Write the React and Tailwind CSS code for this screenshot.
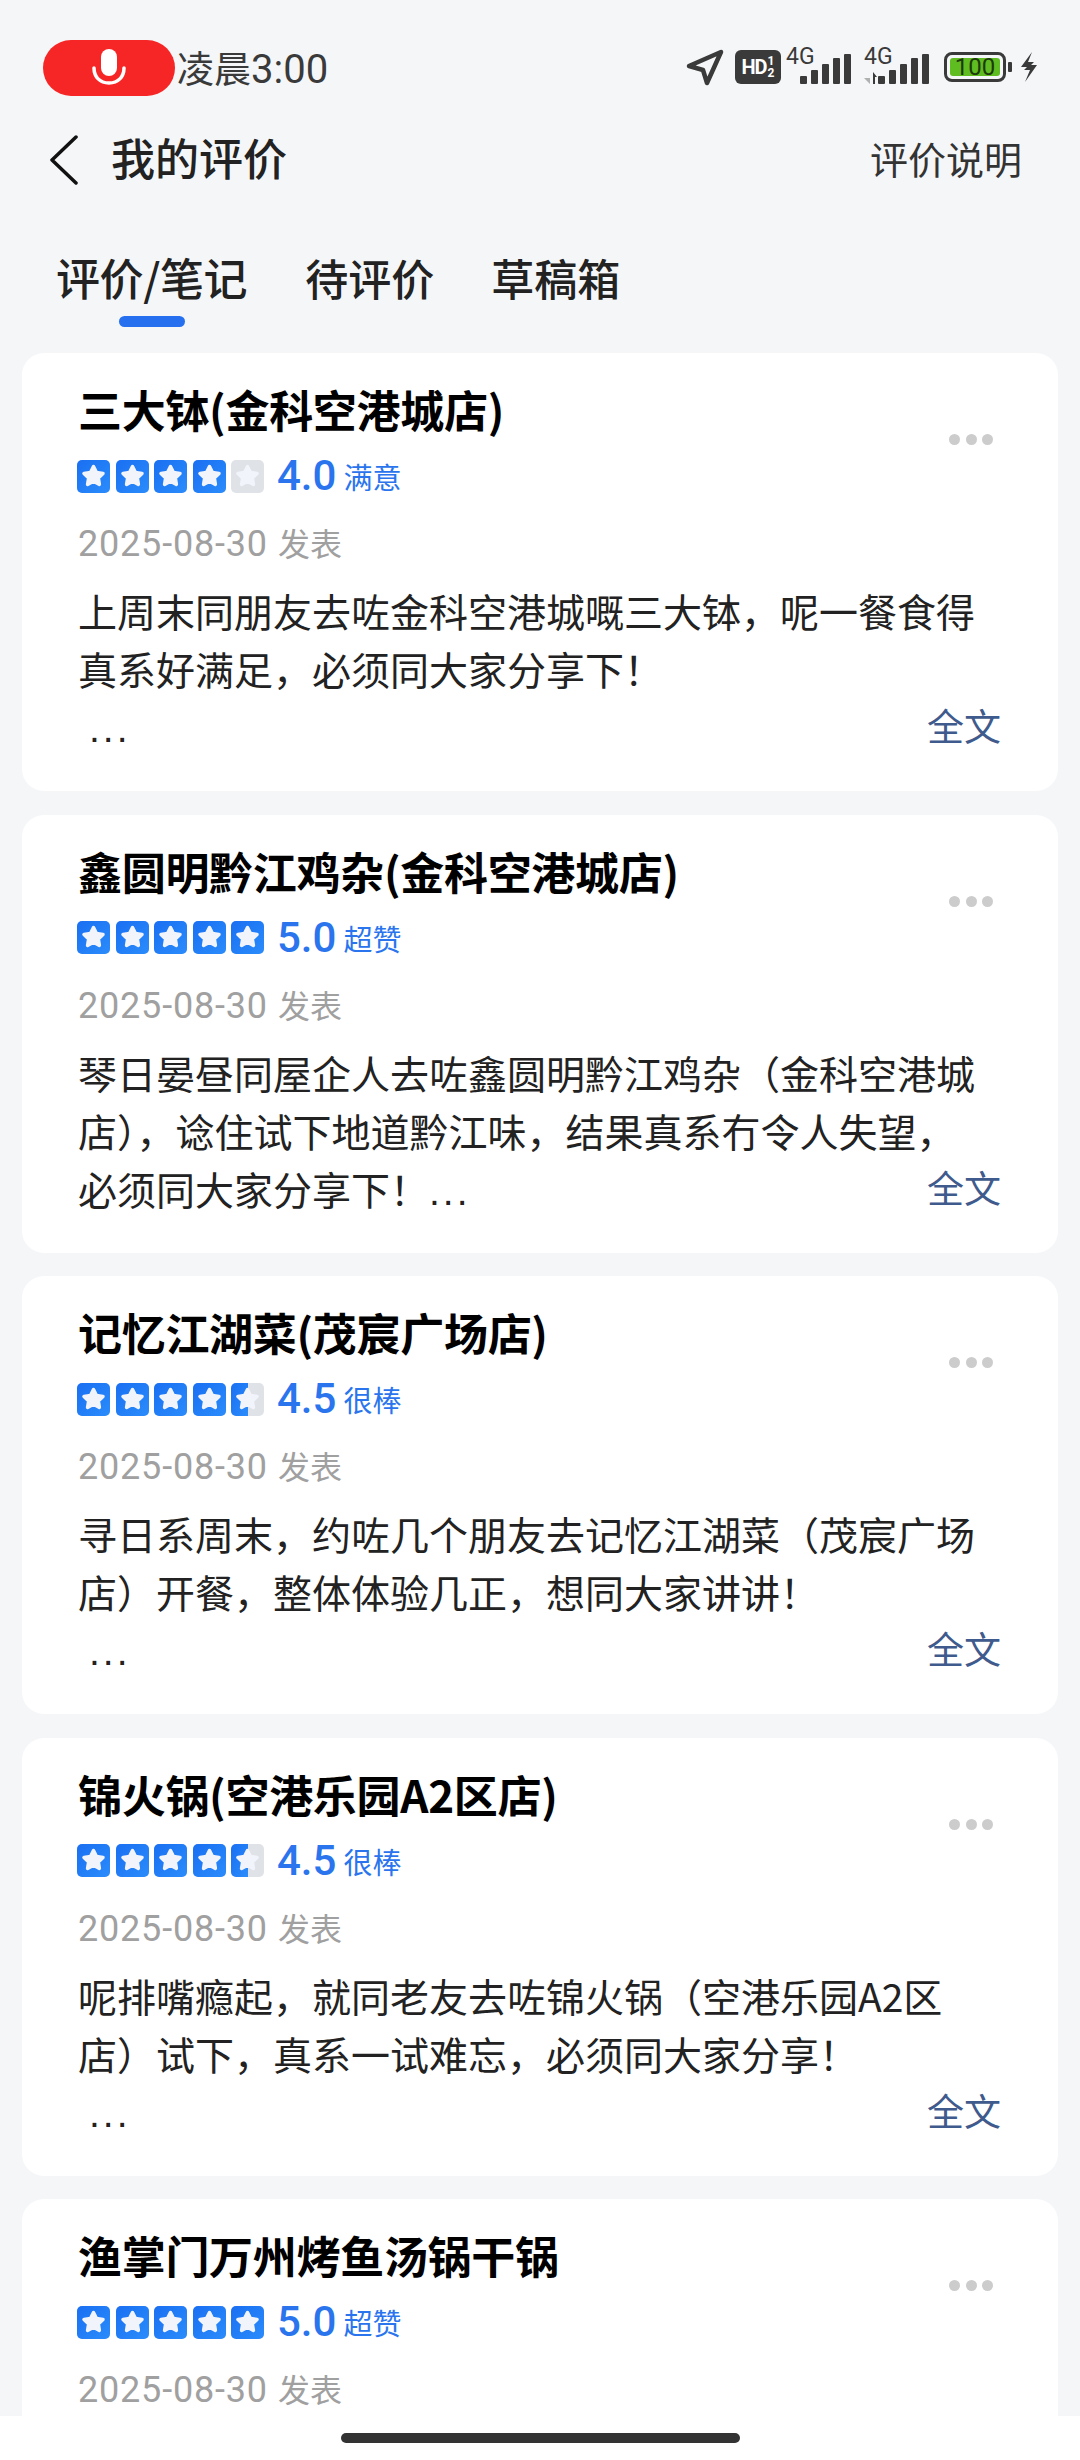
import React from "react";

const font = { fontFamily: '"Noto Sans CJK SC", "Noto Sans", sans-serif' };

const reviews = [
  {
    name: "三大钵(金科空港城店)",
    score: 4,
    label: "4.0",
    word: "满意",
    lines: ["上周末同朋友去咗金科空港城嘅三大钵\uFF0C呢一餐食得", "真系好满足\uFF0C必须同大家分享下\uFF01"],
    dots: "below",
  },
  {
    name: "鑫圆明黔江鸡杂(金科空港城店)",
    score: 5,
    label: "5.0",
    word: "超赞",
    lines: ["琴日晏昼同屋企人去咗鑫圆明黔江鸡杂\uFF08金科空港城", "店\uFF09\uFF0C谂住试下地道黔江味\uFF0C结果真系冇令人失望\uFF0C", "必须同大家分享下\uFF01"],
    dots: "inline",
  },
  {
    name: "记忆江湖菜(茂宸广场店)",
    score: 4.5,
    label: "4.5",
    word: "很棒",
    lines: ["寻日系周末\uFF0C约咗几个朋友去记忆江湖菜\uFF08茂宸广场", "店\uFF09开餐\uFF0C整体体验几正\uFF0C想同大家讲讲\uFF01"],
    dots: "below",
  },
  {
    name: "锦火锅(空港乐园A2区店)",
    score: 4.5,
    label: "4.5",
    word: "很棒",
    lines: ["呢排嘴瘾起\uFF0C就同老友去咗锦火锅\uFF08空港乐园A2区", "店\uFF09试下\uFF0C真系一试难忘\uFF0C必须同大家分享\uFF01"],
    dots: "below",
  },
  {
    name: "渔掌门万州烤鱼汤锅干锅",
    score: 5,
    label: "5.0",
    word: "超赞",
    lines: [],
  },
];

const starPath = "M16.5 6.5l3 6 6.5.9-4.7 4.5 1.1 6.5-5.9-3.1-5.9 3.1 1.1-6.5L7 13.4l6.5-.9z";

const Star = ({ fill }) => (
  <div className="relative w-[33px] h-[33px] rounded-[5px] bg-[#dfe2e7] overflow-hidden shrink-0">
    {fill > 0 && (
      <div
        className="absolute left-0 top-0 h-full bg-gradient-to-br from-[#1a6ff2] to-[#2b8cfb]"
        style={{ width: `${fill * 100}%` }}
      />
    )}
    <svg viewBox="0 0 33 33" className="absolute inset-0 w-full h-full">
      <path d={starPath} fill="#f1f4fb" stroke="#f1f4fb" strokeWidth="3.5" strokeLinejoin="round" />
    </svg>
  </div>
);

const Stars = ({ score }) => (
  <div className="flex gap-[5.5px]">
    {[1, 2, 3, 4, 5].map((n) => (
      <Star key={n} fill={Math.max(0, Math.min(1, score - n + 1))} />
    ))}
  </div>
);

const Signal = ({ dual }) => (
  <div className="relative w-[64px] h-[34px] shrink-0">
    <span className="absolute left-[-1px] top-[-5px] text-[23px] leading-[24px] text-[#3a3a3a]" style={{ fontFamily: "Roboto, sans-serif" }}>
      4G
    </span>
    {dual && (
      <svg viewBox="0 0 16 12" className="absolute left-[-1px] bottom-0 w-[16px] h-[12px]">
        <path d="M0 6h6v-5h0v11z" fill="#b0b0b0" />
        <path d="M9 0l4 5h-2v7H9z" fill="#3a3a3a" />
      </svg>
    )}
    <div className="absolute right-0 bottom-0 flex items-end gap-[4px]">
      <div className="w-[7px] h-[8px] rounded-[1px] bg-[#3a3a3a]" />
      <div className="w-[7px] h-[14px] rounded-[1px] bg-[#3a3a3a]" />
      <div className="w-[7px] h-[20px] rounded-[1px] bg-[#3a3a3a]" />
      <div className="w-[7px] h-[26px] rounded-[1px] bg-[#3a3a3a]" />
      <div className="w-[7px] h-[30px] rounded-[1px] bg-[#3a3a3a]" />
    </div>
  </div>
);

const StatusBar = () => (
  <div className="h-[96px] pt-[40px] pl-[43px] pr-[42px] flex items-start justify-between">
    <div className="flex items-center h-[56px]">
      <div className="w-[132px] h-[56px] rounded-full bg-[#f62626] flex items-center justify-center">
        <svg viewBox="0 0 34 38" className="w-[34px] h-[38px]">
          <rect x="9" y="0" width="16" height="27" rx="8" fill="#fff" />
          <path d="M2 19c0 9 6 15 15 15s15-6 15-15" fill="none" stroke="#fff" strokeWidth="3.5" strokeLinecap="round" />
        </svg>
      </div>
      <span className="ml-[2px] text-[37px] leading-[56px] text-[#3a3a3a]">
        凌晨<span className="text-[40px]" style={{ fontFamily: "Roboto, sans-serif" }}>3:00</span>
      </span>
    </div>
    <div className="flex items-center h-[56px] mt-[-1px]">
      <svg viewBox="0 0 38 38" className="w-[38px] h-[38px]">
        <path d="M3 18L35 4 21 35l-4-13z" fill="none" stroke="#3a3a3a" strokeWidth="4.5" strokeLinejoin="round" />
      </svg>
      <div className="ml-[11px] w-[46px] h-[34px] rounded-[6px] bg-[#3a3a3a] flex items-center justify-center text-white font-bold" style={{ fontFamily: "Roboto, sans-serif" }}>
        <span className="text-[20px] leading-none tracking-[-1px]">HD</span>
        <span className="flex flex-col ml-[1px] text-[12px] leading-[12px]">
          <span>1</span>
          <span>2</span>
        </span>
      </div>
      <div className="ml-[6px]">
        <Signal />
      </div>
      <div className="ml-[14px]">
        <Signal dual />
      </div>
      <div className="ml-[15px] w-[62px] h-[30px] rounded-[8px] border-[3px] border-[#3a3a3a] p-[3px]">
        <div className="w-full h-full rounded-[3px] bg-[#5fbd22] flex items-center justify-center text-[24px] text-[#1d3a0a]" style={{ fontFamily: "Roboto, sans-serif" }}>
          100
        </div>
      </div>
      <div className="ml-[2px] w-[4px] h-[10px] rounded-[1px] bg-[#3a3a3a]" />
      <svg viewBox="0 0 18 30" className="ml-[8px] w-[18px] h-[30px]">
        <path d="M12 0L1 15l6 0-3 3 6 0-5 12L17 13l-6 0 3-3-6 0z" fill="#3a3a3a" />
      </svg>
    </div>
  </div>
);

const NavBar = () => (
  <div className="h-[88px] mt-[20px] pl-[50px] pr-[58px] flex items-center justify-between">
    <div className="flex items-center">
      <svg viewBox="0 0 28 50" className="w-[28px] h-[50px]">
        <path d="M26 2L2 25l24 23" fill="none" stroke="#111" strokeWidth="3.5" strokeLinecap="round" strokeLinejoin="round" />
      </svg>
      <h1 className="ml-[33px] mt-[-6px] text-[44px] leading-[60px] font-medium text-[#222]">我的评价</h1>
    </div>
    <span className="mt-[-4px] text-[38px] leading-[50px] text-[#333]">评价说明</span>
  </div>
);

const Tabs = () => (
  <div className="h-[121px] pl-[56px] flex items-start gap-[58px] pt-[43px]">
    <div className="relative text-[44px] leading-[60px] font-medium text-[#222] tracking-[-0.4px]">
      评价/笔记
      <div className="absolute left-[63px] top-[69px] w-[66px] h-[11px] rounded-full bg-[#2670f0]" />
    </div>
    <div className="text-[43px] leading-[60px] font-medium text-[#222]">待评价</div>
    <div className="text-[43px] leading-[60px] font-medium text-[#222] -ml-[1px]">草稿箱</div>
  </div>
);

const ReviewCard = ({ review }) => (
  <div className="relative mx-[22px] h-[438px] shrink-0 rounded-[22px] bg-white pl-[56px] pt-[27px]">
    <h2 className="text-[44px] leading-[58px] font-bold text-black tracking-[-0.3px]">{review.name}</h2>
    <div className="flex items-center mt-[20px] ml-[-1px]">
      <Stars score={review.score} />
      <span className="ml-[13px] text-[42px] leading-[36px] font-medium text-[#2a75ee]" style={{ fontFamily: "Roboto, sans-serif" }}>
        {review.label}
      </span>
      <span className="ml-[7px] text-[29px] leading-[36px] text-[#2a75ee]">{review.word}</span>
    </div>
    <div className="mt-[26px] text-[32px] leading-[44px] text-[#a0a0a0]">
      <span className="text-[36px] tracking-[0.8px] mr-[3px]" style={{ fontFamily: "Roboto, sans-serif" }}>2025-08-30</span> 发表
    </div>
    <div className="mt-[15px] text-[39px] leading-[58px] text-[#222]">
      {review.lines.map((line, i) => (
        <div key={line} className="whitespace-nowrap">
          {line}
          {review.dots === "inline" && i === review.lines.length - 1 && (
            <span className="tracking-[3px]" style={{ fontFamily: '"Liberation Sans", sans-serif' }}>...</span>
          )}
        </div>
      ))}
      {review.dots === "below" && (
        <div className="pl-[11px] pt-[3px] tracking-[3px]" style={{ fontFamily: '"Liberation Sans", sans-serif' }}>...</div>
      )}
    </div>
    {review.lines.length > 0 && (
      <span className="absolute right-[57px] bottom-[42px] text-[37px] leading-[48px] text-[#3f5a8c]">全文</span>
    )}
    <div className="absolute right-[65px] top-[81px] flex gap-[5.5px]">
      <div className="w-[11px] h-[11px] rounded-full bg-[#ccc]" />
      <div className="w-[11px] h-[11px] rounded-full bg-[#ccc]" />
      <div className="w-[11px] h-[11px] rounded-full bg-[#ccc]" />
    </div>
  </div>
);

export default function App() {
  return (
    <div className="w-[1080px] h-[2460px] bg-[#f5f6f8] flex flex-col overflow-hidden" style={font}>
      <StatusBar />
      <NavBar />
      <Tabs />
      <div className="flex-1 flex flex-col gap-[23.5px] pt-[28px] overflow-hidden">
        {reviews.map((review) => (
          <ReviewCard key={review.name} review={review} />
        ))}
      </div>
      <div className="h-[44px] shrink-0 bg-white flex justify-center pt-[17px]">
        <div className="w-[399px] h-[10px] rounded-full bg-[#333]" />
      </div>
    </div>
  );
}
